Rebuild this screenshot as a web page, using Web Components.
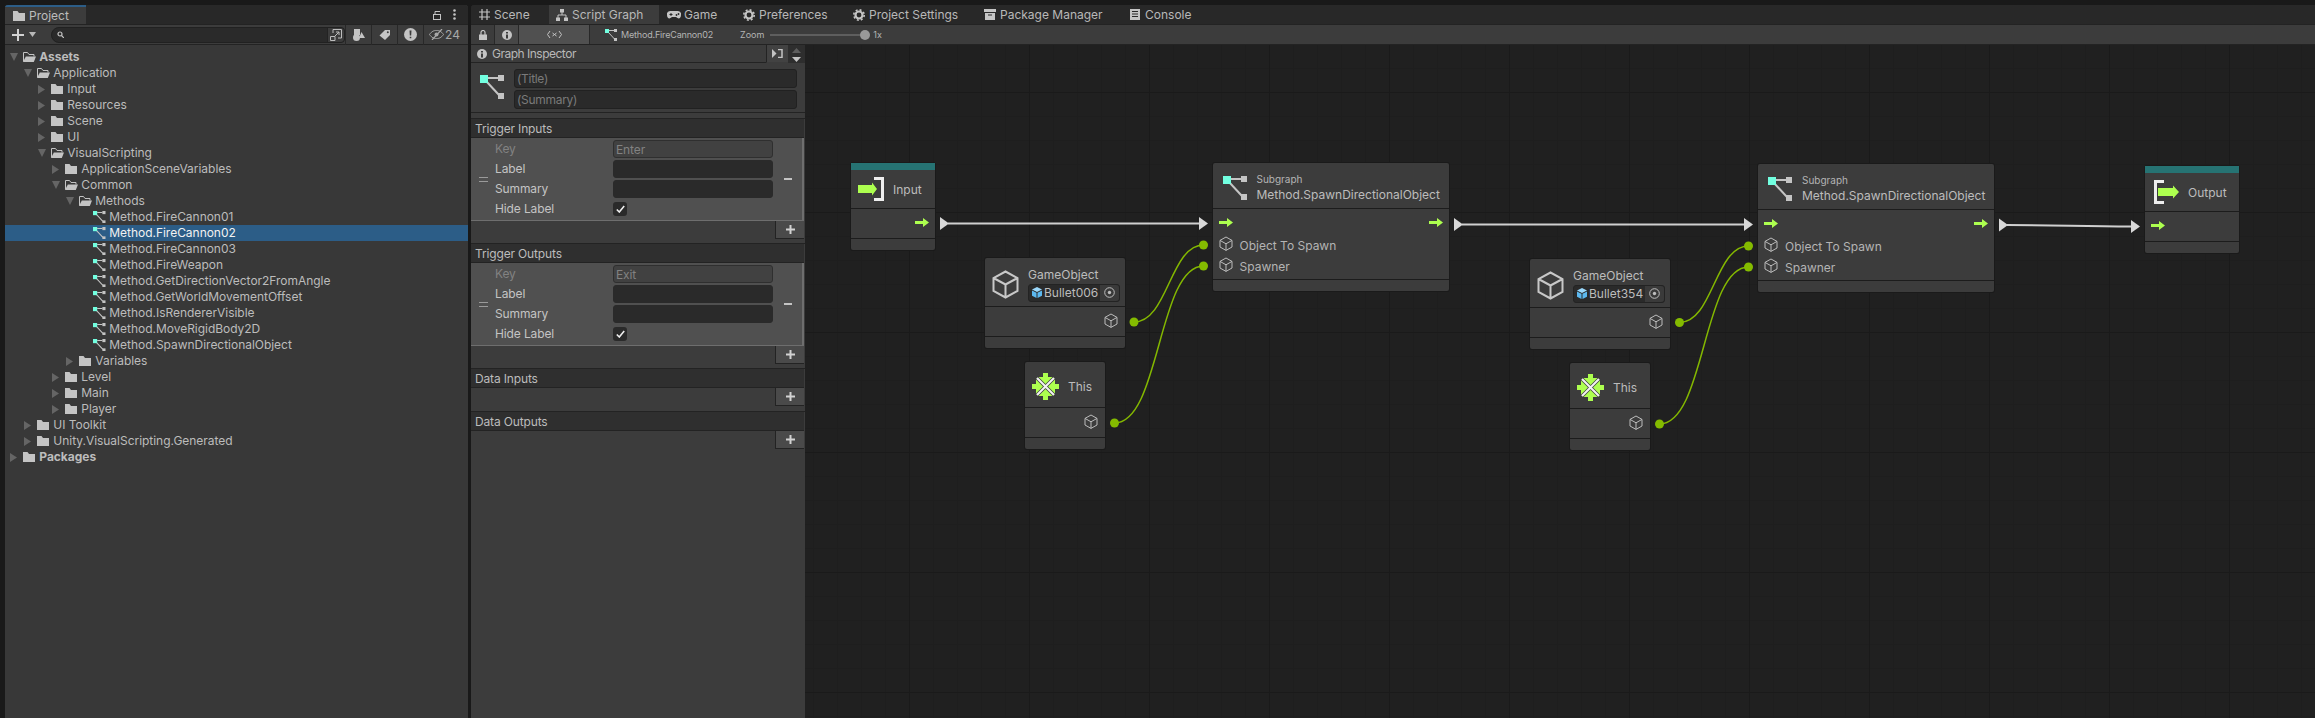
<!DOCTYPE html>
<html><head><meta charset="utf-8"><title>Unity</title>
<style>
html,body{margin:0;padding:0;background:#191919;height:718px;overflow:hidden;font:12px Inter,"Liberation Sans",sans-serif;color:#bcbcbc}
</style></head><body>
<script>
const G='#adff4f',C='#c4c4c4';
const ICONS={
 tri:[7,9,`<path d="M0 0l7 4.500L0 9z" fill="#656565"/>`],
 triDown:[8,8,`<path d="M0 0h8L4 8z" fill="#656565"/>`],
 folder:[12,10,`<path d="M0 0h4.500l1.500 2H12v8H0z" fill="${C}"/>`],
 folderOpen:[13,10,`<path d="M.5 9.500V.5h4l1.500 2h5V4.500" fill="none" stroke="${C}"/><path d="M2.800 4.500H13L10.800 10H0z" fill="${C}"/>`],
 sub:[24,24,`<path d="M8 3h10M6 6l13 14" stroke="${C}" stroke-width="2" fill="none"/><rect x="18" width="6" height="6" fill="${C}"/><rect x="18" y="18" width="6" height="6" fill="${C}"/><rect width="8" height="8" fill="#72ffe0"/>`],
 flow:[14,9,`<path d="M0 3h8V0l6 4.500L8 9V6H0z" fill="${G}"/>`],
 input:[26,24,`<path d="M0 8h14V5.500l5 6.500-5 6.500V16H0z" fill="${G}"/><path d="M16 1.500h8.500v21H16" fill="none" stroke="#eee" stroke-width="3"/>`],
 output:[25,24,`<path d="M10 1.500H1.500v21H10" fill="none" stroke="#eee" stroke-width="3"/><path d="M4 8h15V5.500l6 6.500-6 6.500V16H4z" fill="${G}"/>`],
 cube:[14,15,`<path d="M7 1l6 3.400v6.600l-6 3.400-6-3.400V4.400zM1 4.400l6 3.400 6-3.400M7 7.800v6.600" fill="none" stroke="#bcbcbc" stroke-width="1"/>`],
 cubeBig:[27,29,`<path d="M13.500 1.500l12 6.500v13l-12 6.500-12-6.500V8zM1.500 8l12 6.500L25.500 8M13.500 14.500v13" fill="none" stroke="#c8c8c8" stroke-width="2"/>`],
 blue:[10,11,`<path d="M5 0l5 2.500L5 5 0 2.500z" fill="#9bd8fb"/><path d="M0 3.500l4.500 2.300V11L0 8.700zM10 3.500L5.500 5.800V11L10 8.700z" fill="#5cb8ef"/>`],
 target:[11,11,`<circle cx="5.500" cy="5.500" r="4.800" fill="none" stroke="#bdbdbd"/><circle cx="5.500" cy="5.500" r="1.700" fill="#bdbdbd"/>`],
 self:[27,27,`<path d="M5 5l17 17M22 5L5 22" stroke="#f2f2f2" stroke-width="2.200"/><path d="M11 0h5v4h4.500l-7 7-7-7H11zM11 27h5v-4h4.500l-7-7-7 7H11zM0 11v5h4v4.500l7-7-7-7V11zM27 11v5h-4v4.500l-7-7 7-7V11z" fill="${G}"/>`],
 hash:[11,11,`<path d="M3 0v11M8 0v11M0 3h11M0 8h11" stroke="#c4c4c4" stroke-width="1.200"/>`],
 tree:[12,12,`<path d="M6 3v3M2 9V6h8v3" stroke="${C}" fill="none"/><rect x="4" width="4" height="3.500" fill="${C}"/><rect y="8.500" width="4" height="3.500" fill="${C}"/><rect x="8" y="8.500" width="4" height="3.500" fill="${C}"/>`],
 game:[14,8,`<path d="M3 0h8a3.500 3.500 0 013 4c0 3-2 4-3.500 3L9 6H5L3.500 7C2 8 0 7 0 4a3.500 3.500 0 013-4z" fill="${C}"/><path d="M2.500 3.500h3M4 2v3" stroke="#282828"/><circle cx="9.500" cy="4" r=".9" fill="#282828"/><circle cx="11.500" cy="3" r=".9" fill="#282828"/>`],
 gear:[12,12,`<circle cx="6" cy="6" r="3.500" fill="none" stroke="${C}" stroke-width="2.200"/><circle cx="6" cy="6" r="5.200" fill="none" stroke="${C}" stroke-width="1.600" stroke-dasharray="2 2.080"/>`],
 box:[12,11,`<path d="M0 0h12v3H0zM1 4h10v7H1z" fill="${C}"/><path d="M4 6h4" stroke="#282828"/>`],
 doc:[10,11,`<path d="M0 0h10v11H0z" fill="${C}"/><path d="M2 2.500h6M2 5h6M2 7.500h6" stroke="#282828"/>`],
 plus:[12,12,`<path d="M6 0v12M0 6h12" stroke="#d2d2d2" stroke-width="2"/>`],
 plusS:[9,9,`<path d="M4.500 0v9M0 4.500h9" stroke="#d2d2d2" stroke-width="2"/>`],
 caret:[7,5,`<path d="M0 0h7L3.500 5z" fill="#b8b8b8"/>`],
 search:[7,7,`<circle cx="3" cy="3" r="2" fill="none" stroke="#c4c4c4" stroke-width="1.200"/><path d="M4.500 4.500L7 7" stroke="#c4c4c4" stroke-width="1.200"/>`],
 popout:[12,12,`<path d="M3 4V.5h8.500V9H8M.5 7.500h4.500v4H.5z" fill="none" stroke="#bdbdbd"/><path d="M5 7l4-4M6 3h3v3" fill="none" stroke="#bdbdbd"/>`],
 shapes:[12,12,`<rect x="1" width="6" height="6" fill="${C}"/><circle cx="3.500" cy="8.500" r="3.500" fill="${C}"/><path d="M8.500 3l3.500 6H6z" fill="${C}"/>`],
 tag:[11,10,`<path d="M6 0h5v5L6 10 0.500 5.500z" fill="${C}"/><circle cx="8.800" cy="2.200" r="1" fill="#3c3c3c"/>`],
 warn:[13,13,`<circle cx="6.500" cy="6.500" r="6.500" fill="${C}"/><path d="M5.500 2.500h2l-.3 5h-1.400zM5.700 8.700h1.600v1.600H5.700z" fill="#3c3c3c"/>`],
 eye:[15,11,`<path d="M.5 5.500C3 2 5 1.500 7.500 1.500s4.500.5 7 4c-2.500 3.500-4.500 4-7 4s-4.500-.5-7-4z" fill="none" stroke="#a8a8a8"/><circle cx="7.500" cy="5.500" r="2" fill="#a8a8a8"/><path d="M3 11L13 0" stroke="#a8a8a8" stroke-width="1.200"/>`],
 lockOpen:[8,10,`<path d="M2 4V1.500h5" fill="none" stroke="#c4c4c4"/><rect x=".5" y="4.500" width="7" height="5" fill="none" stroke="#c4c4c4"/>`],
 lock:[8,10,`<path d="M2 5V2.500a2 2 0 014 0V5" fill="none" stroke="#c4c4c4" stroke-width="1.200"/><rect y="4.500" width="8" height="5.500" fill="#c4c4c4"/>`],
 dots:[3,11,`<circle cx="1.500" cy="1.500" r="1.300" fill="#c4c4c4"/><circle cx="1.500" cy="5.500" r="1.300" fill="#c4c4c4"/><circle cx="1.500" cy="9.500" r="1.300" fill="#c4c4c4"/>`],
 info:[10,10,`<circle cx="5" cy="5" r="5" fill="#c4c4c4"/><path d="M4 2h2v1.500H4zM4 4.500h2V8.500H4z" fill="#3c3c3c"/>`],
 code:[15,9,`<path d="M3 1L.5 4.500 3 8M12 1l2.500 3.500L12 8M5.500 3l4 3M9.500 3l-4 3" fill="none" stroke="#c4c4c4"/>`],
 panel:[11,9,`<path d="M0 0l4.500 4.500L0 9z" fill="#c4c4c4"/><path d="M6 .5h4v8H6" fill="none" stroke="#c4c4c4" stroke-width="1.500"/>`],
 up:[9,5,`<path d="M0 5L4.500 0 9 5z" fill="#5e5e5e"/>`],
 down:[9,5,`<path d="M0 0l4.500 5L9 0z" fill="#c4c4c4"/>`],
 minus:[8,2,`<path d="M0 0h8v2H0z" fill="#c4c4c4"/>`],
 handle:[9,5,`<path d="M0 .5h9M0 4.500h9" stroke="#9a9a9a"/>`],
 check:[9,8,`<path d="M.8 4.500L3.300 7 8.200 1" fill="none" stroke="#eee" stroke-width="1.600"/>`]
};
function def(name,css,html){
 class E extends HTMLElement{
  constructor(){super();const r=this.attachShadow({mode:'open'});
   const t=document.createElement('template');
   t.innerHTML=`<style>${css}</style>`+(typeof html==='function'?html(this):html);
   r.appendChild(t.content.cloneNode(true));}
 }
 customElements.define(name,E);
}
def('ui-icon',`:host{display:inline-flex;flex:none;line-height:0}svg{display:block}`,el=>{
 const [w,h,b]=ICONS[el.getAttribute('name')];
 const sw=el.getAttribute('w')||w, sh=el.getAttribute('h')||h;
 return `<svg xmlns="http://www.w3.org/2000/svg" width="${sw}" height="${sh}" viewBox="0 0 ${w} ${h}">${b}</svg>`;
});
/* Project panel */
def('tree-row',`:host{display:flex;align-items:center;height:16px;white-space:nowrap;color:#bcbcbc}
 :host([selected]){background:#2c5d87;color:#f2f2f2}
 :host([bold]){font-weight:700}
 .sp{display:inline-flex;width:13px;flex:none}
 .ic{display:inline-flex;width:16.300px;flex:none}
 .t{line-height:16px;letter-spacing:-.03px}`,el=>{
 const d=+el.getAttribute('depth')||0;const a=el.getAttribute('arrow');const ic=el.getAttribute('icon');
 const sub=ic==='sub';
 return `<span class="sp" style="margin-left:${5+14*d}px">${a?`<ui-icon name="${a==='open'?'triDown':'tri'}"></ui-icon>`:''}</span>
 <span class="ic">${sub?'<ui-icon name="sub" w="12.500" h="12.500"></ui-icon>':`<ui-icon name="${ic==='open'?'folderOpen':'folder'}"></ui-icon>`}</span><span class="t"><slot></slot></span>`;
});
def('project-panel',`:host{display:flex;flex-direction:column;background:#383838;border-radius:3px 3px 0 0;overflow:hidden;min-height:0}
 .tabs{height:19px;background:#282828;display:flex;justify-content:space-between;align-items:center;padding-right:12px;flex:none}
 .tab{width:81px;height:19px;box-sizing:border-box;background:#3c3c3c;border-top:2px solid #2c5d87;display:flex;align-items:center;gap:4px;padding:0 0 0 8px;color:#bcbcbc}
 .right{display:flex;align-items:center;gap:12px}
 .bar{background:#3c3c3c;border-bottom:1px solid #232323;border-top:1px solid #232323;box-sizing:border-box;height:21px;display:flex;align-items:center;flex:none}
 .plus{display:flex;align-items:center;gap:5px;padding-left:7px;width:46px;box-sizing:border-box}
 .search{width:294px;height:16px;background:#2a2a2a;border:1px solid #212121;box-sizing:border-box;border-radius:8px 4px 4px 8px;display:flex;align-items:center;justify-content:space-between;padding-left:5px}
 .pop{width:16px;height:14px;display:flex;align-items:center;justify-content:center;background:#3c3c3c;border-left:1px solid #232323;border-radius:0 4px 4px 0}
 .btn{width:26px;height:20px;box-sizing:border-box;border-left:1px solid #282828;display:flex;align-items:center;justify-content:center;gap:1px;color:#a8a8a8;font-size:12px}
 .btn:first-of-type{margin-left:3px}
 .count{width:42px}
 .list{padding-top:4px;flex:1}`,
 `<div class="tabs"><div class="tab"><ui-icon name="folder"></ui-icon><span>Project</span></div><div class="right"><ui-icon name="lockOpen"></ui-icon><ui-icon name="dots"></ui-icon></div></div>
 <div class="bar"><div class="plus"><ui-icon name="plus"></ui-icon><ui-icon name="caret"></ui-icon></div><div class="search"><ui-icon name="search"></ui-icon><div class="pop"><ui-icon name="popout"></ui-icon></div></div>
 <div class="btn"><ui-icon name="shapes"></ui-icon></div><div class="btn"><ui-icon name="tag"></ui-icon></div><div class="btn"><ui-icon name="warn"></ui-icon></div><div class="btn count"><ui-icon name="eye"></ui-icon><span>24</span></div></div>
 <div class="list"><slot></slot></div>`);
/* Tabs */
def('tab-item',`:host{display:flex;align-items:center;height:19px;box-sizing:border-box;gap:var(--g,5px);color:#b8b8b8;white-space:nowrap;flex:none}`,`<slot name="i"></slot><slot></slot>`);
def('graph-toolbar',`:host{display:flex;align-items:center;height:21px;background:#3c3c3c;border-top:1px solid #232323;border-bottom:1px solid #232323;box-sizing:border-box;color:#b4b4b4;flex:none}
 .b{height:19px;display:flex;align-items:center;justify-content:center;border-right:1px solid #282828;box-sizing:border-box}
 .path{margin-left:15px;display:flex;align-items:center;gap:4px;font-size:9px;letter-spacing:-.17px;width:135px}
 .z{font-size:9px}
 .track{width:95px;height:2px;background:#5e5e5e;margin-left:6px;position:relative}
 .thumb{position:absolute;right:-5px;top:-4px;width:10px;height:10px;border-radius:50%;background:#999}
 .one{margin-left:8px;font-size:9px}`,
 `<div class="b" style="width:24px"><ui-icon name="lock"></ui-icon></div><div class="b" style="width:24px;background:#474747"><ui-icon name="info"></ui-icon></div><div class="b" style="width:71px;background:#505050"><ui-icon name="code"></ui-icon></div>
 <div class="path"><ui-icon name="sub" w="12" h="12"></ui-icon><span>Method.FireCannon02</span></div><span class="z">Zoom</span><div class="track"><div class="thumb"></div></div><span class="one">1x</span>`);
/* Inspector */
def('insp-head',`:host{display:flex;height:18px;background:#3c3c3c;border-bottom:1px solid #232323;box-sizing:border-box;align-items:center}
 .l{flex:1;display:flex;align-items:center;gap:5px;padding-left:6px;color:#b8b8b8;letter-spacing:-.5px}
 .m{width:22px;height:18px;background:#424242;border-left:1px solid #232323;border-bottom:1px solid #3c3c3c;box-sizing:border-box;display:flex;align-items:center;justify-content:center;}
 .s{width:17px;height:18px;display:flex;flex-direction:column;align-items:center;justify-content:space-between;padding:3px 0 1px;box-sizing:border-box;background:#2e2e2e}`,
 `<div class="l"><ui-icon name="info"></ui-icon><span>Graph Inspector</span></div><div class="m"><ui-icon name="panel"></ui-icon></div><div class="s"><ui-icon name="up"></ui-icon><ui-icon name="down"></ui-icon></div>`);
def('insp-title',`:host{display:flex;height:50px;box-sizing:border-box;padding:6px 8px 0 9px;gap:10px;background:#3c3c3c;border-bottom:1px solid #232323}
 .ic{padding-top:6px}
 .col{flex:1;display:flex;flex-direction:column;gap:2px}
 .f{height:19px;background:#2a2a2a;border:1px solid #212121;border-radius:3px;box-sizing:border-box;color:#7a7a7a;padding-left:2px;line-height:17px;letter-spacing:-.3px}`,
 `<div class="ic"><ui-icon name="sub" w="24" h="24"></ui-icon></div><div class="col"><div class="f">(Title)</div><div class="f">(Summary)</div></div>`);
def('list-section',`:host{display:block;border-top:1px solid #232323}
 :host([first]){margin-top:5px}
 .h{height:19px;box-sizing:border-box;background:#2f2f2f;border-bottom:1px solid #232323;padding-left:4px;line-height:20px;color:#bcbcbc;margin-right:1px;letter-spacing:-.15px}
 .c{display:flex;height:83px;box-sizing:border-box;background:#505050;border-bottom:1px solid #6e6e6e;border-right:2px solid #6e6e6e;margin-right:1px}
 .hd{width:24px;display:flex;align-items:center;justify-content:center}
 .rows{width:278px;padding-top:1px;display:flex;flex-direction:column}
 .r{height:20px;display:flex;align-items:center;color:#c4c4c4;letter-spacing:-.12px}
 .r span{width:118px;flex:none;padding-bottom:2px}
 .r.k span{color:#828282}
 .i{width:160px;height:18px;box-sizing:border-box;background:#2a2a2a;border:1px solid #2a2a2a;border-radius:3px;padding-left:2px;line-height:18px}
 .k .i{background:#414141;border-color:#2f2f2f;color:#828282}
 .cb{width:14px;height:14px;background:#2a2a2a;border-radius:3px;display:flex;align-items:center;justify-content:center}
 .min{flex:1;display:flex;align-items:center;justify-content:center}
 .add{height:22px;background:#3c3c3c;display:flex;justify-content:flex-end;padding-right:1px}
 :host([empty]) .add{height:23px}
 .p{width:29px;height:18px;box-sizing:border-box;background:#4a4a4a;border-left:1px solid #232323;border-bottom:1px solid #232323;display:flex;align-items:center;justify-content:center}`,
 el=>{const e=el.getAttribute('key');
 return `<div class="h">${el.getAttribute('title')}</div>`+(e?`<div class="c"><div class="hd"><ui-icon name="handle"></ui-icon></div><div class="rows">
 <div class="r k"><span>Key</span><div class="i">${e}</div></div><div class="r"><span>Label</span><div class="i"></div></div><div class="r"><span>Summary</span><div class="i"></div></div><div class="r"><span>Hide Label</span><div class="cb"><ui-icon name="check"></ui-icon></div></div></div>
 <div class="min"><ui-icon name="minus"></ui-icon></div></div>`:'')+`<div class="add"><div class="p"><ui-icon name="plusS"></ui-icon></div></div>`});
def('graph-inspector',`:host{display:flex;flex-direction:column;background:#3c3c3c;width:334px;flex:none}`,`<slot></slot>`);
/* Canvas */
def('graph-canvas',`:host{display:block;position:relative;flex:1;overflow:hidden;background-color:#202020;
 background-image:linear-gradient(#1a1a1a 1px,transparent 1px),linear-gradient(90deg,#1a1a1a 1px,transparent 1px),linear-gradient(#1e1e1e 1px,transparent 1px),linear-gradient(90deg,#1e1e1e 1px,transparent 1px);
 background-size:120px 120px,120px 120px,24px 24px,24px 24px;background-position:0 47px,104px 0,0 23px,8px 0}
 svg{position:absolute;left:0;top:0;z-index:2;pointer-events:none}`,
 `<slot></slot><svg xmlns="http://www.w3.org/2000/svg" width="1510" height="673" viewBox="805 45 1510 673">
 <defs><g id="h"><path d="M0-6.500L9 0 0 6.500z" fill="#d8d8d8"/></g></defs>
 <path d="M948 223.500H1200M1462 224.500H1745M2007 225C2060 225 2080 226.500 2132 226.500" stroke="#d0d0d0" stroke-width="2" fill="none"/>
 <use href="#h" x="940" y="223.500"/><use href="#h" x="1199" y="223.500"/><use href="#h" x="1454" y="224.500"/><use href="#h" x="1744" y="224.500"/><use href="#h" x="1999" y="225"/><use href="#h" x="2131" y="226.500"/>
 <g fill="none" stroke="#84b800" stroke-width="1.500"><path d="M1134 322C1168 322 1170 245 1203.500 245M1114.500 423C1160 423 1158 266 1203.500 266M1679.500 322.500C1713 322.500 1715 246 1748.500 246M1659.500 424C1705 424 1703 267 1748.500 267"/></g>
 <g fill="#84bb00"><circle cx="1134" cy="322" r="4.500"/><circle cx="1203.500" cy="245" r="4.500"/><circle cx="1114.500" cy="423" r="4.500"/><circle cx="1203.500" cy="266" r="4.500"/><circle cx="1679.500" cy="322.500" r="4.500"/><circle cx="1748.500" cy="246" r="4.500"/><circle cx="1659.500" cy="424" r="4.500"/><circle cx="1748.500" cy="267" r="4.500"/></g></svg>`);
def('graph-node',`:host{position:absolute;display:flex;flex-direction:column;z-index:1;background:#3c3c3c;box-shadow:0 0 0 1px #1a1a1a;border-radius:2px;box-sizing:border-box;color:#bcbcbc}
 .t{height:7px;background:#267373;flex:none}
 .h{display:flex;align-items:center;border-bottom:1px solid #1c1c1c;flex:none;box-sizing:content-box}
 .b{border-bottom:1px solid #1c1c1c;display:flex;flex-direction:column;padding-top:3px;box-sizing:border-box;flex:none}
 .f{height:11px;flex:none}`,
 el=>{const teal=el.hasAttribute('teal');
  const [x,y,w,h,b]=['x','y','w','head','body'].map(a=>+el.getAttribute(a));
  el.style.left=(x-805)+'px';el.style.top=(y-45)+'px';el.style.width=w+'px';
  return (teal?'<div class="t"></div>':'')+`<div class="h" style="height:${h}px"><slot name="head"></slot></div><div class="b" style="height:${b}px"><slot></slot></div><div class="f"></div>`;});
def('node-head',`:host{display:flex;align-items:center;height:100%;width:100%;box-sizing:border-box;padding:var(--pt,4px) 0 0 var(--pl,7px);gap:var(--gap,10px)}
 .c{display:flex;flex-direction:column;gap:var(--cg,2.500px)}`,`<slot name="i"></slot><div class="c"><slot></slot></div>`);
def('node-port',`:host{display:flex;align-items:center;height:21px;padding:0 var(--pr,6px) 0 var(--pl,6px);white-space:nowrap}
 :host([right]){justify-content:flex-end}
 :host([split]){justify-content:space-between}
 .l{display:flex;align-items:center;gap:7px}
 .t{padding-top:4px;color:#b4b4b4}`,el=>`<div class="l"><slot name="i"></slot>${el.textContent.trim()?'<span class="t"><slot></slot></span>':''}</div><slot name="r"></slot>`);
def('obj-field',`:host{display:flex;align-items:center;width:92px;height:18px;background:#2a2a2a;border:1px solid #232323;box-sizing:border-box;border-radius:3px;color:#bcbcbc}
 .a{flex:1;display:flex;align-items:center;gap:2px;padding-left:3px}
 .b{width:19px;height:16px;background:#3a3a3a;display:flex;align-items:center;justify-content:center;border-radius:0 3px 3px 0}`,
 el=>`<div class="a"><ui-icon name="blue"></ui-icon><span><slot></slot></span></div><div class="b"><ui-icon name="target"></ui-icon></div>`);

function rows(){
 const R=[['Assets',0,'open','open',1],['Application',1,'open','open'],['Input',2,'c','f'],['Resources',2,'c','f'],['Scene',2,'c','f'],['UI',2,'c','f'],['VisualScripting',2,'open','open'],['ApplicationSceneVariables',3,'c','f'],['Common',3,'open','open'],['Methods',4,'open','open'],
 ['Method.FireCannon01',5,'','sub'],['Method.FireCannon02',5,'','sub',0,1],['Method.FireCannon03',5,'','sub'],['Method.FireWeapon',5,'','sub'],['Method.GetDirectionVector2FromAngle',5,'','sub'],['Method.GetWorldMovementOffset',5,'','sub'],['Method.IsRendererVisible',5,'','sub'],['Method.MoveRigidBody2D',5,'','sub'],['Method.SpawnDirectionalObject',5,'','sub'],
 ['Variables',4,'c','f'],['Level',3,'c','f'],['Main',3,'c','f'],['Player',3,'c','f'],['UI Toolkit',1,'c','f'],['Unity.VisualScripting.Generated',1,'c','f'],['Packages',0,'c','f',1]];
 return R.map(([t,d,a,i,b,s])=>`<tree-row depth="${d}" ${a?`arrow="${a}"`:''} icon="${i}" ${b?'bold':''} ${s?'selected':''}>${t}</tree-row>`).join('');
}
function subgraph(x,y){return `<graph-node x="${x}" y="${y}" w="236" head="45" body="71"><node-head slot="head" style="--pl:10px;--gap:10px"><ui-icon slot="i" name="sub" w="24" h="24"></ui-icon><span style="font-size:10px;color:#b4b4b4">Subgraph</span><span>Method.SpawnDirectionalObject</span></node-head>
 <node-port split><ui-icon slot="i" name="flow"></ui-icon><ui-icon slot="r" name="flow"></ui-icon></node-port><node-port><ui-icon slot="i" name="cube"></ui-icon>Object To Spawn</node-port><node-port><ui-icon slot="i" name="cube"></ui-icon>Spawner</node-port></graph-node>`}
function go(x,y,n){return `<graph-node x="${x}" y="${y}" w="140" head="48" body="30"><node-head slot="head" style="--pl:7px;--gap:9px;--cg:2px"><ui-icon slot="i" name="cubeBig"></ui-icon><span>GameObject</span><obj-field>${n}</obj-field></node-head><node-port right style="--pr:7px"><ui-icon slot="i" name="cube"></ui-icon></node-port></graph-node>`}
function self(x,y){return `<graph-node x="${x}" y="${y}" w="80" head="45" body="30"><node-head slot="head" style="--pl:7px;--gap:9px"><ui-icon slot="i" name="self"></ui-icon><span>This</span></node-head><node-port right style="--pr:7px"><ui-icon slot="i" name="cube"></ui-icon></node-port></graph-node>`}
const T=(i,t,st='')=>`<tab-item style="${st}"><ui-icon slot="i" name="${i}"></ui-icon>${t}</tab-item>`;
document.body.innerHTML=`<style>
#app{display:flex;height:718px;padding:5px 0 0 5px;gap:3px;width:2315px;box-sizing:border-box}
#left{width:463px;flex:none;display:flex;flex-direction:column}
#right{flex:1;display:flex;flex-direction:column;min-width:0;background:#282828;border-radius:3px 0 0 0;overflow:hidden}
#tabs{display:flex;height:19px;background:#282828;flex:none}
#main{flex:1;display:flex;min-height:0}
project-panel{flex:1}
</style><div id="app"><div id="left"><project-panel>${rows()}</project-panel></div>
<div id="right"><div id="tabs">
${T('hash','Scene','padding-left:8px;width:78px;--g:4px')}
${T('tree','Script Graph','padding-left:7px;width:110px;background:#3c3c3c;--g:4px')}
${T('game','Game','padding-left:8px;width:84px;--g:3px')}
${T('gear','Preferences','width:110px;--g:4px')}
${T('gear','Project Settings','width:131px;--g:4px')}
${T('box','Package Manager','width:146px;--g:4px')}
${T('doc','Console','--g:5px')}
</div>
<graph-toolbar></graph-toolbar>
<div id="main"><graph-inspector><insp-head></insp-head><insp-title></insp-title>
<list-section first title="Trigger Inputs" key="Enter"></list-section><list-section title="Trigger Outputs" key="Exit"></list-section><list-section empty title="Data Inputs"></list-section><list-section empty title="Data Outputs"></list-section></graph-inspector>
<graph-canvas>
<graph-node teal x="851" y="163" w="84" head="38" body="30"><node-head slot="head" style="--pl:7px;--gap:9px;--pt:0px"><ui-icon slot="i" name="input"></ui-icon><span>Input</span></node-head><node-port right><ui-icon slot="i" name="flow"></ui-icon></node-port></graph-node>
${subgraph(1212.500,163)}${go(985,258,'Bullet006')}${self(1025,362)}
${subgraph(1758,164)}${go(1530,259,'Bullet354')}${self(1570,363)}
<graph-node teal x="2145" y="166" w="94" head="38" body="30"><node-head slot="head" style="--pl:9px;--gap:9px;--pt:0px"><ui-icon slot="i" name="output"></ui-icon><span>Output</span></node-head><node-port><ui-icon slot="i" name="flow"></ui-icon></node-port></graph-node>
</graph-canvas></div></div></div>`;
</script></body></html>
